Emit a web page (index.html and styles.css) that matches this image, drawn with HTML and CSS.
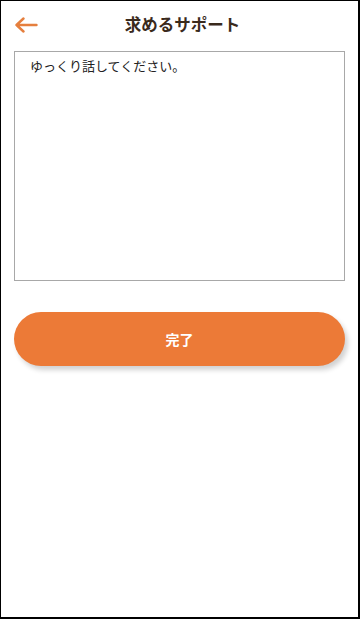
FILE: index.html
```html
<!DOCTYPE html>
<html>
<head>
    <meta charset="utf-8">
    <title>求めるサポート</title>
    <link rel="stylesheet" href="styles.css">
</head>
<body>
    <div class="screen">
        <div class="header">
            <button class="back" aria-label="戻る">
                <svg width="24" height="16" viewBox="0 0 24 16">
                    <path d="M22.5 8H2.5M9.5 1.5L2.5 8L9.5 14.5" fill="none" stroke="#e57f3e" stroke-width="2.4" stroke-linecap="round" stroke-linejoin="round"/>
                </svg>
            </button>
            <h1 class="title">求めるサポート</h1>
        </div>

        <div class="content">
            <div class="memo">ゆっくり話してください。</div>
            <button class="done">完了</button>
        </div>
    </div>
</body>
</html>
```

FILE: styles.css
```css
body {
    margin: 0;
    font-family: "Noto Sans CJK JP", "Noto Sans", sans-serif;
    background-color: #fff;
}

.screen {
    box-sizing: border-box;
    width: 360px;
    height: 619px;
    border: 1px solid #000;
    border-right-width: 2px;
    border-bottom-width: 2px;
    background-color: #fff;
}

.header {
    position: relative;
    box-sizing: border-box;
    height: 50px;
    padding-bottom: 4px;
    display: flex;
    align-items: center;
    justify-content: center;
}

.back {
    position: absolute;
    left: 13px;
    top: 16px;
    padding: 0;
    border: none;
    background: none;
    line-height: 0;
}

.title {
    margin: 0 0 0 6px;
    font-size: 16.5px;
    font-weight: bold;
    color: #3a2a1c;
}

.content {
    padding: 0 13px;
}

.memo {
    box-sizing: border-box;
    height: 230px;
    border: 1.5px solid #a8a8a8;
    padding: 4px 15px;
    font-size: 13px;
    color: #222;
}

.done {
    display: block;
    width: 100%;
    height: 54px;
    margin-top: 31px;
    border: none;
    border-radius: 27px;
    background-color: #ec7a37;
    color: #fff;
    font-family: inherit;
    font-size: 14px;
    font-weight: bold;
    box-shadow: 3px 4px 5px rgba(0, 0, 0, 0.18);
}
```
